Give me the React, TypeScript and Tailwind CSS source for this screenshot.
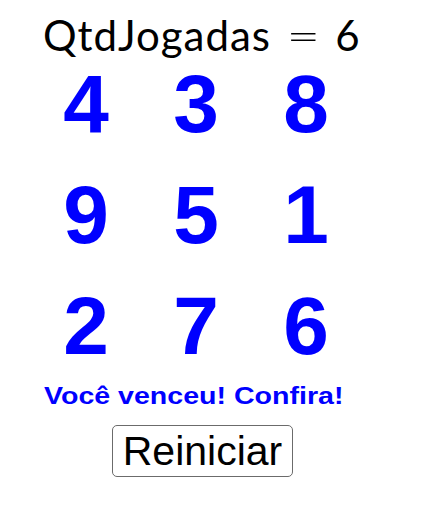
export default function App() {
  const cells = [4, 3, 8, 9, 5, 1, 2, 7, 6]
  return (
    <div className="w-[429px] h-[512px] bg-white flex flex-col items-start font-['Liberation_Sans',sans-serif]">
      <div className="ml-[43px] mt-[11px] flex items-baseline text-[42px] leading-[48px] text-black font-['Lato',sans-serif] whitespace-pre">
        <span className="tracking-[1px]">QtdJogadas</span>
        <span className="ml-[20px] inline-block scale-x-[1.4] font-light">=</span>
        <span className="ml-[20px]">6</span>
      </div>
      <div className="ml-[31px] mt-[5px] grid grid-cols-[110px_110px_110px] grid-rows-[111px_111px_111px]">
        {cells.map((n, i) => (
          <div key={i} className="flex justify-center items-start text-[82px] leading-[80px] font-bold text-[#0000ff]">
            {n}
          </div>
        ))}
      </div>
      <div className="ml-[44px] -mt-[16px] text-[24px] leading-[30px] font-bold text-[#0000ff] scale-x-[1.19] origin-left whitespace-nowrap">
        Você venceu! Confira!
      </div>
      <button className="ml-[112px] mt-[14px] w-[181px] h-[52px] rounded-[5px] border border-[#6b6b6b] bg-white text-[41px] leading-none text-black">
        Reiniciar
      </button>
    </div>
  )
}
